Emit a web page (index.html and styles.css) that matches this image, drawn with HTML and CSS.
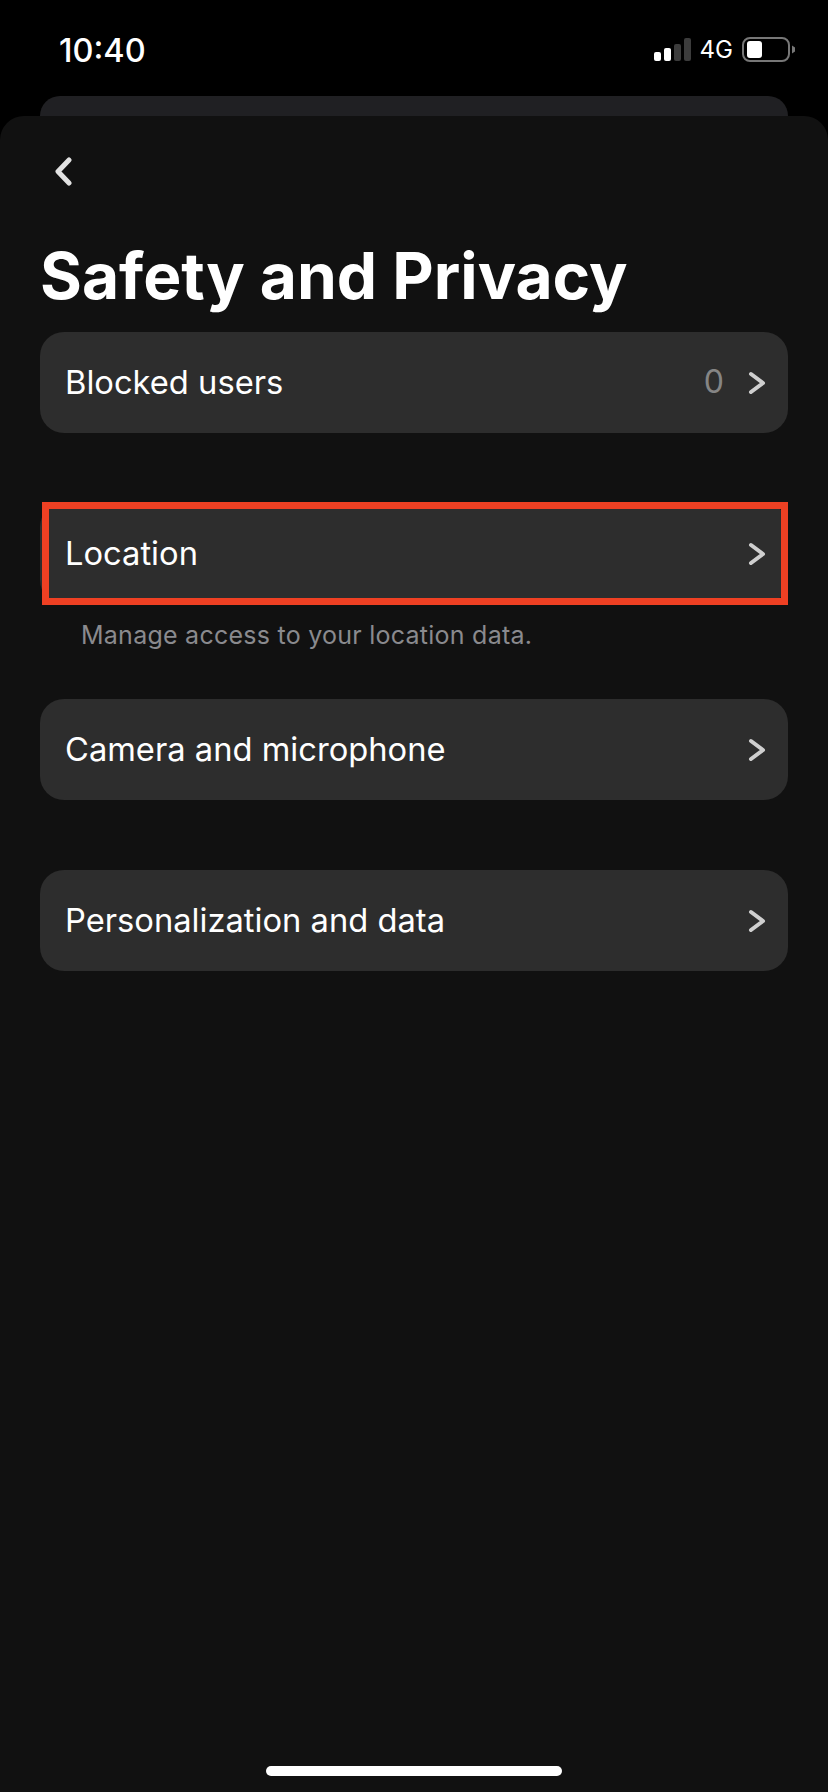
FILE: index.html
```html
<!DOCTYPE html>
<html lang="en">
<head>
<meta charset="utf-8">
<title>Safety and Privacy</title>
<link rel="stylesheet" href="styles.css">
</head>
<body>
<div class="screen">
  <header class="status">
    <span class="time">10:40</span>
    <div class="status-right">
      <svg class="signal" width="37" height="24" viewBox="0 0 37 24" aria-hidden="true">
        <rect x="0" y="14" width="7" height="9" rx="2" fill="#fff"/>
        <rect x="10" y="10" width="7" height="13" rx="2" fill="#fff"/>
        <rect x="20" y="6" width="7" height="17" rx="2" fill="#3c3c3c"/>
        <rect x="30" y="0" width="7" height="23" rx="2" fill="#3c3c3c"/>
      </svg>
      <span class="net">4G</span>
      <svg class="battery" width="54" height="26" viewBox="0 0 54 26" aria-hidden="true">
        <rect x="1" y="1" width="46" height="23" rx="7" fill="none" stroke="#777" stroke-width="2"/>
        <rect x="5" y="4" width="15" height="17" rx="3" fill="#fff"/>
        <path d="M50 8.500 L53 10.500 V14.500 L50 16.500 Z" fill="#777"/>
      </svg>
    </div>
  </header>
  <div class="peek"></div>
  <main class="sheet">
    <button class="back" aria-label="Back">
      <svg width="18" height="29" viewBox="0 0 18 29"><path d="M15 3 L4 14.500 L15 26" fill="none" stroke="#e2e2e2" stroke-width="5" stroke-linecap="round" stroke-linejoin="round"/></svg>
    </button>
    <h1 class="title">Safety and Privacy</h1>
    <section class="group">
      <div class="row">
        <span class="label">Blocked users</span>
        <span class="count">0</span>
        <svg class="chev" width="18" height="24" viewBox="0 0 18 24"><path d="M3 3 L15 12 L3 21" fill="none" stroke="#cfcfcf" stroke-width="4" stroke-linecap="round" stroke-linejoin="round"/></svg>
      </div>
    </section>
    <section class="group">
      <div class="row highlighted">
        <span class="label">Location</span>
        <svg class="chev" width="18" height="24" viewBox="0 0 18 24"><path d="M3 3 L15 12 L3 21" fill="none" stroke="#cfcfcf" stroke-width="4" stroke-linecap="round" stroke-linejoin="round"/></svg>
        <span class="mark"></span>
      </div>
      <p class="note">Manage access to your location data.</p>
    </section>
    <section class="group">
      <div class="row">
        <span class="label">Camera and microphone</span>
        <svg class="chev" width="18" height="24" viewBox="0 0 18 24"><path d="M3 3 L15 12 L3 21" fill="none" stroke="#cfcfcf" stroke-width="4" stroke-linecap="round" stroke-linejoin="round"/></svg>
      </div>
    </section>
    <section class="group">
      <div class="row">
        <span class="label">Personalization and data</span>
        <svg class="chev" width="18" height="24" viewBox="0 0 18 24"><path d="M3 3 L15 12 L3 21" fill="none" stroke="#cfcfcf" stroke-width="4" stroke-linecap="round" stroke-linejoin="round"/></svg>
      </div>
    </section>
    <div class="home"></div>
  </main>
</div>
</body>
</html>
```

FILE: styles.css
```css
* { box-sizing: border-box; }
html, body { margin: 0; padding: 0; background: #000; }
body { font-family: Inter, "Liberation Sans", sans-serif; color: #fff; }
.screen { width: 828px; height: 1792px; display: flex; flex-direction: column; overflow: hidden; background: #000; }

.status { height: 96px; flex: none; display: flex; justify-content: space-between; padding: 31px 32px 0 59px; }
.time { font-size: 32.500px; font-weight: 500; line-height: 40px; letter-spacing: 0; }
.status-right { display: flex; align-items: flex-start; margin-top: -1px; }
.signal { margin: 8px 9px 0 0; }
.net { font-size: 24px; font-weight: 400; line-height: 30px; margin: 5px 9px 0 0; }
.battery { margin-top: 7px; }

.peek { height: 20px; flex: none; margin: 0 40px; background: #202023; border-radius: 24px 24px 0 0; }

.sheet { flex: 1; display: flex; flex-direction: column; background: #111; border-radius: 24px 24px 0 0; padding: 0 40px; }
.back { align-self: flex-start; margin: 41px 0 0 14px; padding: 0; height: 29px; background: none; border: 0; display: block; }
.back svg { display: block; }
.title { margin: 52px 0 0; font-size: 64px; font-weight: 700; line-height: 76px; letter-spacing: 0; }

.group { margin-bottom: 70px; }
.group:first-of-type { margin-top: 18px; }
.row { position: relative; height: 101px; display: flex; align-items: center; background: #2d2d2d; border-radius: 24px; padding: 0 22px 0 25px; }
.label { flex: 1; font-size: 32.700px; font-weight: 410; line-height: 40px; padding-bottom: 2px; }
.count { font-size: 32px; font-weight: 400; line-height: 40px; color: #858585; margin-right: 24px; padding-bottom: 2px; }
.chev { display: block; flex: none; }
.mark { position: absolute; left: 2px; right: 0; top: -1px; bottom: -1px; border: 7px solid #ee4023; }
.note { margin: 15px 0 -22px 41px; font-size: 25px; line-height: 32px; color: #8a8a8e; letter-spacing: .25px; }

.home { margin: auto auto 16px; width: 296px; height: 10px; flex: none; background: #fff; border-radius: 5px; }
```
